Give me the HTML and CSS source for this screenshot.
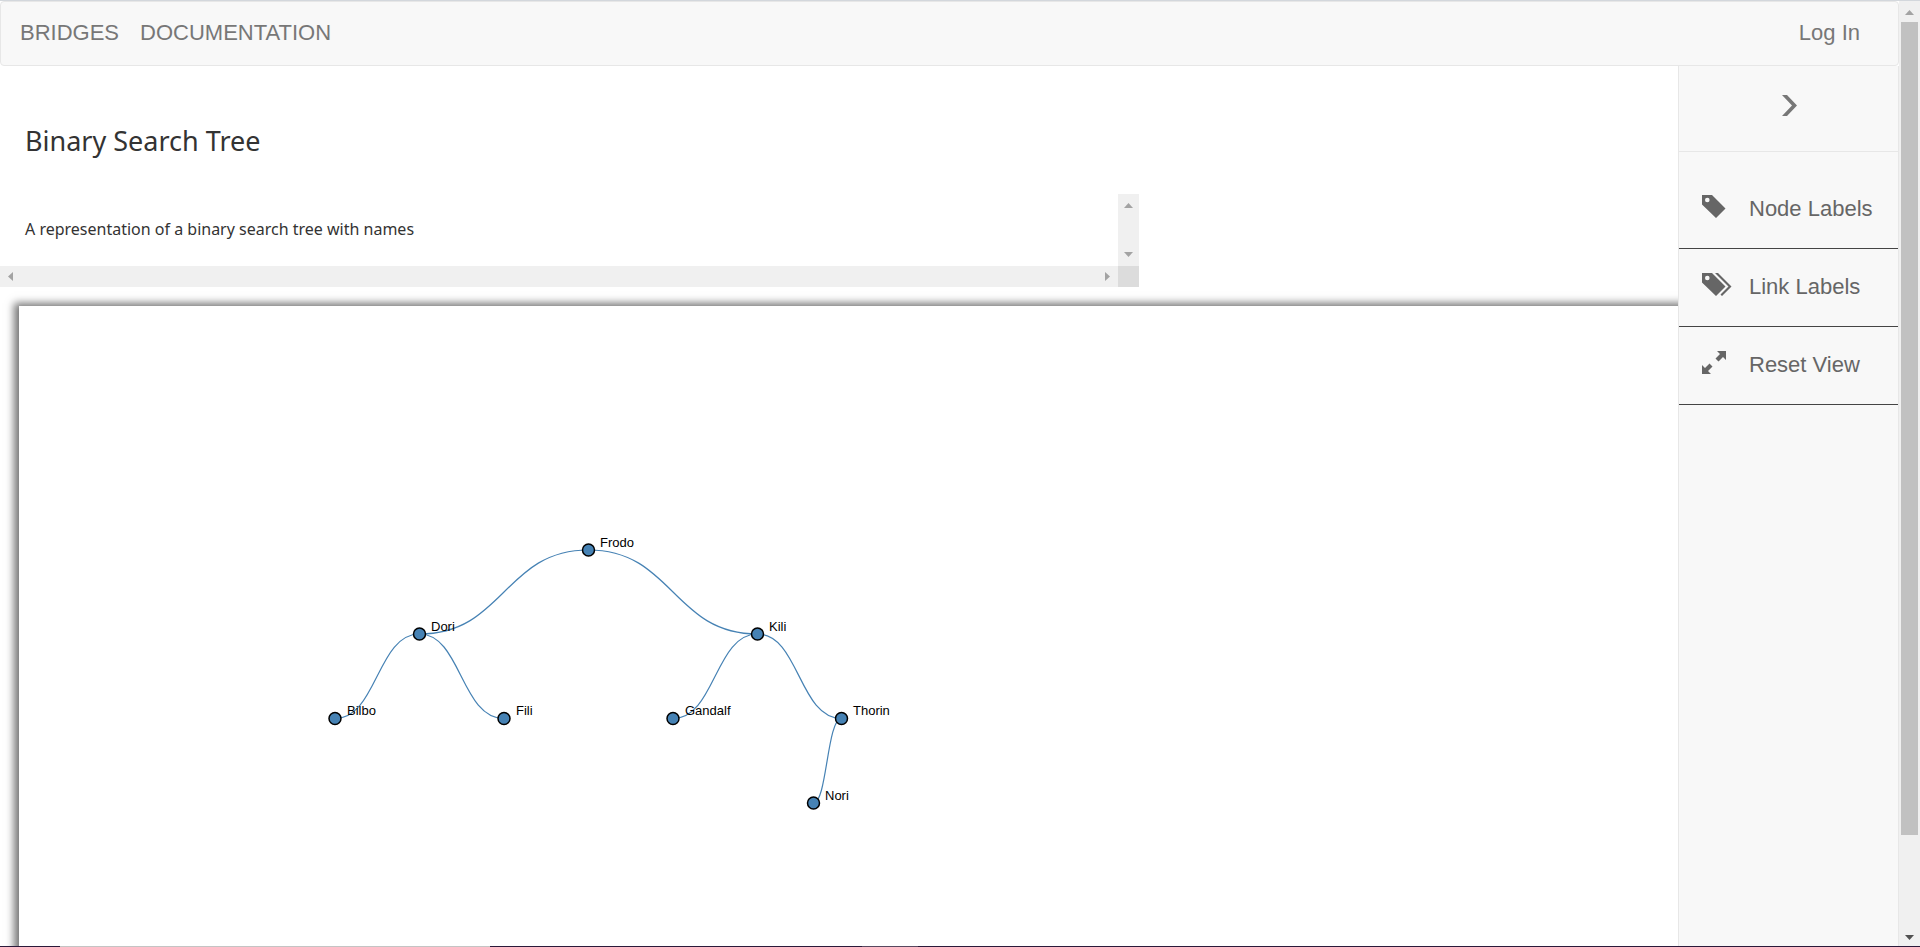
FILE: index.html
```html
<!DOCTYPE html>
<html lang="en">
<head>
<meta charset="utf-8">
<title>Bridges - Binary Search Tree</title>
<link rel="stylesheet" href="styles.css">
</head>
<body>
<div class="window">
  <div class="page">
    <nav class="navbar">
      <a class="nav-link" href="#">BRIDGES</a>
      <a class="nav-link" href="#">DOCUMENTATION</a>
      <a class="nav-link nav-login" href="#">Log In</a>
    </nav>
    <div class="content">
      <main class="main">
        <h1 class="title">Binary Search Tree</h1>
        <div class="description">
          <p class="description-text">A representation of a binary search tree with names</p>
          <div class="bar bar-side">
            <svg class="arrow" viewBox="0 0 21 21"><path d="M6 14h9l-4.500-5z"/></svg>
            <svg class="arrow" viewBox="0 0 21 21"><path d="M6 7h9l-4.500 5z"/></svg>
          </div>
          <div class="bar bar-foot">
            <svg class="arrow" viewBox="0 0 21 21"><path d="M13 6v9l-5-4.500z"/></svg>
            <svg class="arrow" viewBox="0 0 21 21"><path d="M8 6v9l5-4.500z"/></svg>
          </div>
          <div class="bar-corner"></div>
        </div>
        <div class="canvas">
          <svg class="tree" role="img" aria-label="Binary search tree">
            <g class="links">
              <path d="M569.500 244C485 244 485 328 400.500 328"/>
              <path d="M569.500 244C654 244 654 328 738.500 328"/>
              <path d="M400.500 328C358 328 358 412.500 316 412.500"/>
              <path d="M400.500 328C442 328 442 412.500 485 412.500"/>
              <path d="M738.500 328C696 328 696 412.500 654 412.500"/>
              <path d="M738.500 328C780 328 780 412.500 822.500 412.500"/>
              <path d="M822.500 412.500C808 412.500 808 497 794.500 497"/>
            </g>
            <g class="nodes">
              <circle cx="569.500" cy="244" r="6"/><text x="581" y="241">Frodo</text>
              <circle cx="400.500" cy="328" r="6"/><text x="412" y="325">Dori</text>
              <circle cx="738.500" cy="328" r="6"/><text x="750" y="325">Kili</text>
              <circle cx="316" cy="412.500" r="6"/><text x="328" y="409">Bilbo</text>
              <circle cx="485" cy="412.500" r="6"/><text x="497" y="409">Fili</text>
              <circle cx="654" cy="412.500" r="6"/><text x="666" y="409">Gandalf</text>
              <circle cx="822.500" cy="412.500" r="6"/><text x="834" y="409">Thorin</text>
              <circle cx="794.500" cy="497" r="6"/><text x="806" y="494">Nori</text>
            </g>
          </svg>
        </div>
      </main>
      <aside class="sidebar">
        <button class="collapse" type="button" aria-label="Collapse menu">
          <svg class="chevron" viewBox="0 0 16 22"><path d="M0 0h5l10 10.500L5 21H0l10-10.500z"/></svg>
        </button>
        <button class="tool" type="button">
          <svg class="icon" viewBox="0 0 30 24"><path fill-rule="evenodd" d="M0 0h10l13.500 13.500-9.500 9.500L0 9.500zM5.300 2.700a2.300 2.300 0 1 0 0 4.600a2.300 2.300 0 1 0 0-4.600z"/></svg>
          Node Labels
        </button>
        <button class="tool" type="button">
          <svg class="icon" viewBox="0 0 30 24"><path fill-rule="evenodd" d="M0 0h10l13.500 13.500-9.500 9.500L0 9.500zM5.300 2.700a2.300 2.300 0 1 0 0 4.600a2.300 2.300 0 1 0 0-4.600z"/><path d="M13 0h3l13.500 13.500-9.500 9.500-1.500-1.500 8-8z"/></svg>
          Link Labels
        </button>
        <button class="tool" type="button">
          <svg class="icon" viewBox="0 0 30 24"><path d="M15 0h9v9l-3-3-4.500 4.500-3-3L18 3zM0 23v-9l3 3 4.500-4.500 3 3L6 20l3 3z"/></svg>
          Reset View
        </button>
      </aside>
    </div>
  </div>
  <div class="scrollbar">
    <svg class="arrow" viewBox="0 0 21 21"><path d="M6 14h9l-4.500-5z"/></svg>
    <div class="thumb"></div>
    <svg class="arrow arrow-dark" viewBox="0 0 21 21"><path d="M6 10h9l-4.500 5z"/></svg>
  </div>
</div>
<div class="taskbar"><div class="task"></div><div class="task-dim"></div></div>
</body>
</html>
```
FILE: styles.css
```css
* { box-sizing: border-box; }

body {
  margin: 0;
  height: 100vh;
  display: flex;
  flex-direction: column;
  overflow: hidden;
  background: #fff;
  color: #333;
  font-family: "Liberation Sans", Arial, sans-serif;
  font-size: 22px;
}

button {
  margin: 0;
  border: 0;
  background: none;
  font: inherit;
  color: inherit;
  cursor: pointer;
}

.window {
  flex: 1;
  min-height: 0;
  display: flex;
  border-top: 1px solid #d3d7dc;
}

.page {
  flex: 1;
  min-width: 0;
  display: flex;
  flex-direction: column;
}

.navbar {
  display: flex;
  gap: 21px;
  height: 65px;
  padding: 15px 38px 0 19px;
  border: 1px solid #e7e7e7;
  border-radius: 4px;
  background: #f8f8f8;
  line-height: 32px;
}

.nav-link {
  color: #777;
  text-decoration: none;
}

.nav-login { margin-left: auto; }

.content {
  flex: 1;
  min-height: 0;
  display: flex;
}

.main {
  flex: 1;
  min-width: 0;
  display: flex;
  flex-direction: column;
  overflow: hidden;
}

.title {
  margin: 55px 0 33px 25px;
  font-family: "Noto Sans", sans-serif;
  font-size: 27px;
  font-weight: 400;
  line-height: 40px;
}

.description {
  display: grid;
  grid-template-columns: 1fr 21px;
  grid-template-rows: 72px 21px;
  width: 67.9%;
  margin-bottom: 19px;
}

.description-text {
  margin: 0;
  padding: 23px 25px;
  font-family: "Noto Sans", sans-serif;
  font-size: 16px;
  line-height: 24px;
}

.bar {
  display: flex;
  justify-content: space-between;
  background: #f0f0f0;
}

.bar-side { flex-direction: column; }
.bar-corner { background: #dcdcdc; }

.arrow {
  display: block;
  width: 21px;
  height: 21px;
  fill: #a3a3a3;
}

.arrow-dark { fill: #505050; }

.canvas {
  flex: 1;
  min-height: 0;
  margin: 0 -20px -20px 19px;
  background: #fff;
  box-shadow: -2px 0 8px 3px #777;
}

.tree {
  display: block;
  width: 100%;
  height: 100%;
}

.links {
  fill: none;
  stroke: steelblue;
  stroke-width: 1.2;
}

.nodes circle {
  fill: steelblue;
  stroke: #000;
  stroke-width: 1.5;
}

.nodes text {
  fill: #000;
  font-size: 13px;
}

.sidebar {
  display: flex;
  flex-direction: column;
  width: 221px;
  border: solid #e7e7e7;
  border-width: 0 1px;
  background: #f8f8f8;
  color: #666;
}

.collapse {
  height: 86px;
  padding: 0 0 0 3px;
  margin-bottom: 19px;
  border-bottom: 1px solid #e7e7e7;
  color: #777;
}

.chevron {
  width: 16px;
  height: 22px;
  fill: currentColor;
}

.tool {
  display: flex;
  gap: 17px;
  height: 78px;
  padding: 24px 0 0 23px;
  border-bottom: 1px solid #444;
  line-height: 28px;
  text-align: left;
}

.icon {
  width: 30px;
  height: 24px;
  fill: currentColor;
}

.scrollbar {
  display: flex;
  flex-direction: column;
  width: 21px;
  background: #f0f0f0;
}

.thumb {
  flex: 0 1 86%;
  margin: 0 2px;
  background: #c1c1c1;
}

.scrollbar .arrow-dark { margin-top: auto; }

.taskbar {
  display: flex;
  height: 1px;
  background: #2b1a3a;
}

.task {
  width: 430px;
  margin-left: 60px;
  background: #c4c4c4;
}

.task-dim {
  width: 56px;
  margin-left: 372px;
  background: #58485f;
}
```
